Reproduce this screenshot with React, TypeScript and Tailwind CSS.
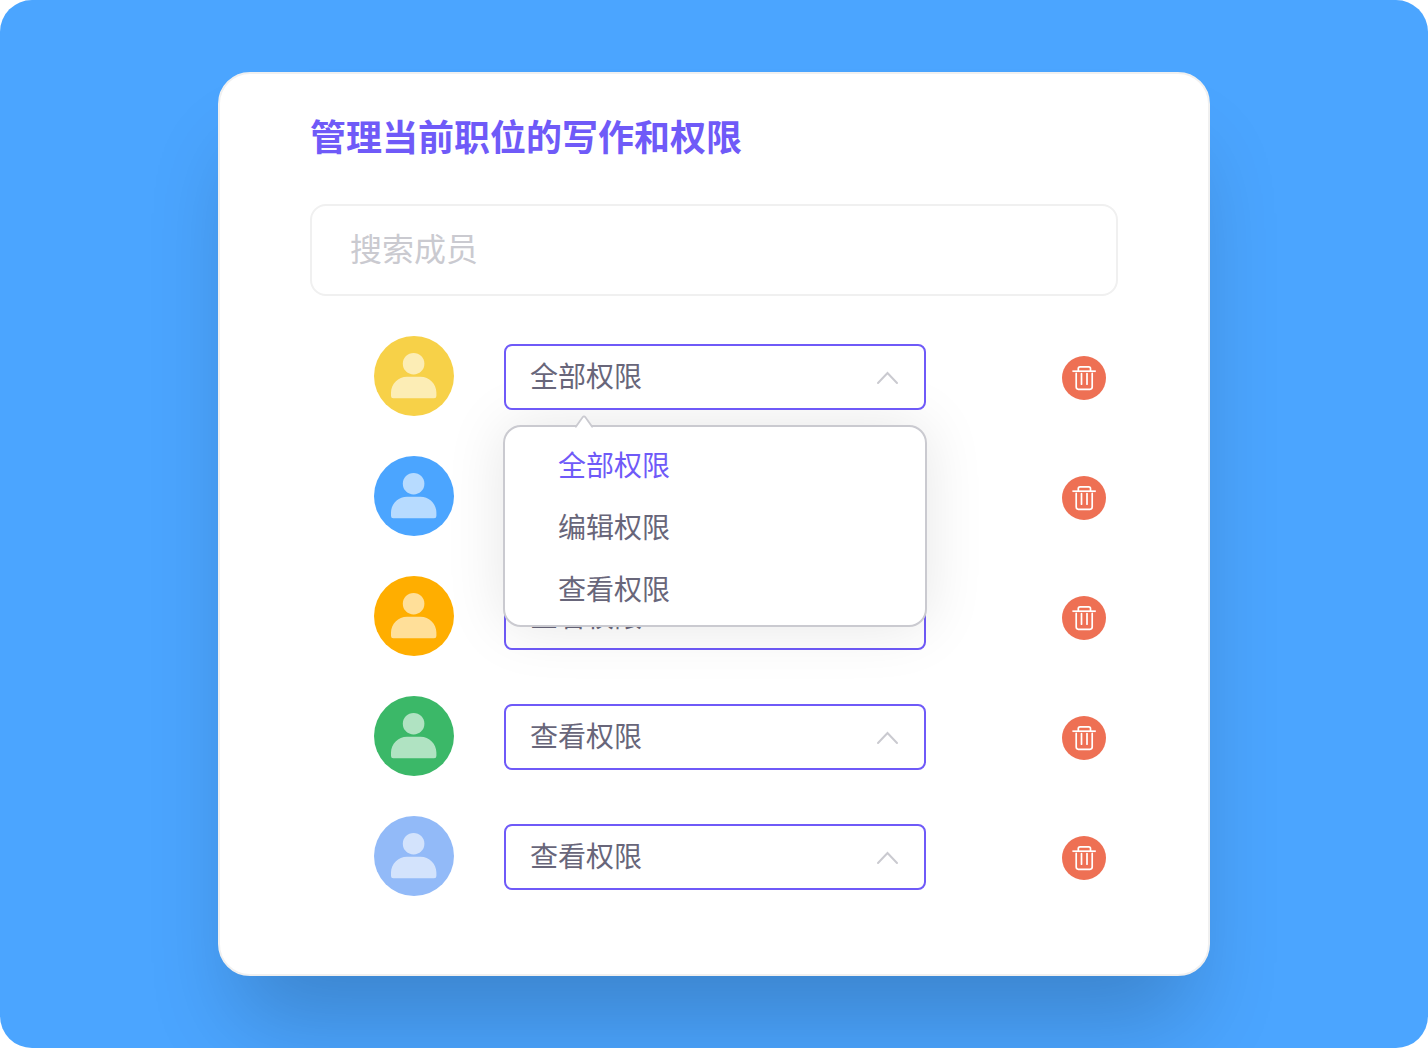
import { useState } from "react";

const PERMISSIONS = ["全部权限", "编辑权限", "查看权限"];

const initialMembers = [
  { id: 1, color: "bg-[#f7d148]", permission: "全部权限" },
  { id: 2, color: "bg-[#4ba5ff]", permission: "编辑权限" },
  { id: 3, color: "bg-[#ffae00]", permission: "查看权限" },
  { id: 4, color: "bg-[#3bb868]", permission: "查看权限" },
  { id: 5, color: "bg-[#92baf8]", permission: "查看权限" },
];

function Avatar({ color }: { color: string }) {
  return (
    <div className={`size-20 shrink-0 rounded-full ${color}`}>
      <svg viewBox="0 0 80 80" className="size-full fill-white/60" aria-hidden="true">
        <circle cx="39.6" cy="27.7" r="10.8" />
        <path d="M33 40.7h13.5c8.8 0 15.9 7.1 15.9 15.9v3.4a2.3 2.3 0 0 1-2.3 2.3H19.3A2.3 2.3 0 0 1 17 60v-3.4c0-8.8 7.2-15.9 16-15.9z" />
      </svg>
    </div>
  );
}

function TrashIcon() {
  return (
    <svg
      viewBox="0 0 44 44"
      className="size-full fill-none stroke-white"
      strokeWidth="1.7"
      aria-hidden="true"
    >
      <path d="M10.4 15.2h23.4" />
      <path d="M16.3 15v-2.4a1.8 1.8 0 0 1 1.8-1.8h8.6a1.8 1.8 0 0 1 1.8 1.8V15" />
      <path d="M14.2 17.4v13.7a2.2 2.2 0 0 0 2.2 2.2h11.6a2.2 2.2 0 0 0 2.2-2.2V17.4" strokeLinecap="round" />
      <path d="M19.5 17.6v10.6M25 17.6v10.6" strokeLinecap="round" />
    </svg>
  );
}

function PermissionMenu({
  value,
  onSelect,
}: {
  value: string;
  onSelect: (permission: string) => void;
}) {
  return (
    <div className="absolute -inset-x-px top-full z-10 mt-[15px] rounded-[18px] border-2 border-[#cacad0] bg-white py-1.5 shadow-[0_0_60px_rgba(0,0,0,0.1)]">
      {/* little arrow pointing at the field */}
      <svg viewBox="0 0 20 14" className="absolute left-[69px] -top-3 h-3.5 w-5" aria-hidden="true">
        <path d="M0 14 2 11.5 8.6 2.2q1.4-1.8 2.8 0L18 11.5 20 14z" className="fill-white" />
        <path
          d="M1 11.5H2L8.6 2.2q1.4-1.8 2.8 0L18 11.5h1"
          className="fill-none stroke-[#cacad0]"
          strokeWidth="1.8"
        />
      </svg>
      <ul>
        {PERMISSIONS.map((permission) => (
          <li key={permission}>
            <button
              type="button"
              onClick={() => onSelect(permission)}
              className={`block h-[62px] w-full px-[53px] text-left text-[28px] ${
                permission === value ? "text-[#6f5af8]" : "text-[#68667a]"
              }`}
            >
              {permission}
            </button>
          </li>
        ))}
      </ul>
    </div>
  );
}

export default function App() {
  const [members, setMembers] = useState(initialMembers);
  const [openId, setOpenId] = useState<number | null>(1);

  const updatePermission = (id: number, permission: string) => {
    setMembers(members.map((m) => (m.id === id ? { ...m, permission } : m)));
    setOpenId(null);
  };

  return (
    <main className="min-h-screen overflow-hidden rounded-[32px] bg-[#4ba5ff] px-6 py-18 font-['Noto_Sans_CJK_SC',sans-serif]">
      <section className="mx-auto w-full max-w-[992px] rounded-[32px] border-2 border-[#f0f0f0] bg-white px-[90px] pt-10 pb-[78px] shadow-[0_64px_90px_-20px_rgba(0,0,0,0.2)]">
        <h1 className="text-[36px] leading-[42px] font-bold text-[#6f5af8]">管理当前职位的写作和权限</h1>

        <input
          type="text"
          aria-label="搜索成员"
          placeholder="搜索成员"
          className="mt-12 block h-[92px] w-full rounded-2xl border-2 border-[#f0f0f0] px-[38px] pb-1.5 text-[32px] text-[#68667a] outline-none placeholder:text-[#cacad0]"
        />

        <ul className="mt-10 flex flex-col gap-10 pr-3 pl-16">
          {members.map((member) => (
            <li key={member.id} className="flex items-start">
              <Avatar color={member.color} />

              <div className="relative mt-2 ml-[50px] flex-1">
                <select
                  aria-label="成员权限"
                  value={member.permission}
                  onChange={(e) => updatePermission(member.id, e.target.value)}
                  className={`block h-[66px] w-full appearance-none rounded-lg border-2 border-[#6f5af8] px-6 pb-1 text-[28px] text-[#68667a] outline-none ${
                    openId === member.id ? "relative z-20 bg-white" : "bg-transparent"
                  }`}
                >
                  {PERMISSIONS.map((permission) => (
                    <option key={permission}>{permission}</option>
                  ))}
                </select>
                <svg
                  viewBox="0 0 24 14"
                  className={`pointer-events-none absolute top-[27px] right-[26px] h-3.5 w-6 fill-none stroke-[#cacad0] ${
                    openId === member.id ? "z-20" : ""
                  }`}
                  strokeWidth="2"
                  strokeLinecap="round"
                  aria-hidden="true"
                >
                  <path d="m2 12 9.5-10L21 12" />
                </svg>

                {openId === member.id && (
                  <PermissionMenu
                    value={member.permission}
                    onSelect={(permission) => updatePermission(member.id, permission)}
                  />
                )}
              </div>

              <button
                type="button"
                aria-label="删除成员"
                onClick={() => setMembers(members.filter((m) => m.id !== member.id))}
                className="mt-5 ml-[136px] size-11 shrink-0 rounded-full bg-[#ee7054]"
              >
                <TrashIcon />
              </button>
            </li>
          ))}
        </ul>
      </section>
    </main>
  );
}
